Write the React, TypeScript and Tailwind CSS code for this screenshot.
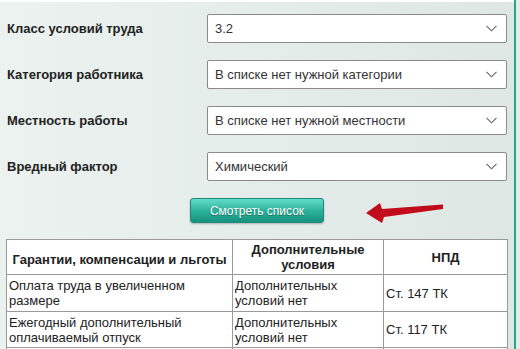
import React from "react";

const rows = [
  { label: "Класс условий труда", value: "3.2" },
  { label: "Категория работника", value: "В списке нет нужной категории" },
  { label: "Местность работы", value: "В списке нет нужной местности" },
  { label: "Вредный фактор", value: "Химический" },
];

function Chevron() {
  return (
    <svg width="11" height="7" viewBox="0 0 11 7" className="shrink-0">
      <path d="M0.5 0.8 L5.5 5.8 L10.5 0.8" fill="none" stroke="#666" strokeWidth="1.1" />
    </svg>
  );
}

export default function App() {
  return (
    <div
      className="w-[520px] h-[349px] overflow-hidden flex bg-[#e8eeeb]"
      style={{ fontFamily: '"Liberation Sans", Arial, sans-serif' }}
    >
      <div className="w-[514px] h-full flex flex-col bg-gradient-to-r from-[#ebf2ef] to-[#dfe7e4] border-t-2 border-white">
        <div className="shrink-0 flex flex-col gap-[17px] pt-[12px]">
          {rows.map((r) => (
            <div key={r.label} className="flex items-center h-[29px]">
              <div className="w-[207px] pl-[7px] text-[13px] font-bold text-[#222]">{r.label}</div>
              <div className="w-[300px] h-[29px] bg-white border border-[#8a8a8a] rounded-[2px] flex items-center justify-between pl-[7px] pr-[9px] text-[13px] text-[#333]">
                <span>{r.value}</span>
                <Chevron />
              </div>
            </div>
          ))}
        </div>
        <div className="shrink-0 relative h-[25px] mt-[17px]">
          <button className="absolute left-[190px] top-0 w-[134px] h-[25px] rounded-[3px] bg-gradient-to-b from-[#63dccb] via-[#2cb39c] to-[#17927f] border border-[#1b8d7a] text-white text-[12px] [text-shadow:0_1px_1px_rgba(0,0,0,0.35)] shadow-[0_1px_2px_rgba(0,0,0,0.25)]">
            Смотреть список
          </button>
          <svg className="absolute left-0 top-[-198px]" width="514" height="349" viewBox="0 0 514 349">
            <path d="M366,213 L380,203 L382,209 L443,204.5 L443,209 L384,217 L382,223 Z" fill="#c10c1c" />
          </svg>
        </div>
        <div className="shrink-0 mt-[16px] ml-[6px] w-[501px] bg-white">
          <table className="w-[501px] border-collapse text-[13px] text-[#222] leading-[15px] table-fixed">
            <colgroup>
              <col className="w-[226px]" />
              <col className="w-[151px]" />
              <col className="w-[124px]" />
            </colgroup>
            <thead>
              <tr className="h-[35px]">
                <th className="border border-[#9a9a9a] font-bold text-center px-[5px] pt-[4px]">Гарантии, компенсации и льготы</th>
                <th className="border border-[#9a9a9a] font-bold text-center px-[5px]">Дополнительные условия</th>
                <th className="border border-[#9a9a9a] font-bold text-center px-[5px]">НПД</th>
              </tr>
            </thead>
            <tbody>
              <tr className="h-[37px]">
                <td className="border border-[#9a9a9a] px-[2px] align-middle">Оплата труда в увеличенном размере</td>
                <td className="border border-[#9a9a9a] px-[2px] align-middle">Дополнительных условий нет</td>
                <td className="border border-[#9a9a9a] px-[2px] align-middle">Ст. 147 ТК</td>
              </tr>
              <tr className="h-[36px]">
                <td className="border border-[#9a9a9a] px-[2px] align-middle">Ежегодный дополнительный оплачиваемый отпуск</td>
                <td className="border border-[#9a9a9a] px-[2px] align-middle">Дополнительных условий нет</td>
                <td className="border border-[#9a9a9a] px-[2px] align-middle">Ст. 117 ТК</td>
              </tr>
              <tr className="h-[36px]">
                <td className="border border-[#9a9a9a] px-[2px]">&nbsp;</td>
                <td className="border border-[#9a9a9a] px-[2px]">&nbsp;</td>
                <td className="border border-[#9a9a9a] px-[2px]">&nbsp;</td>
              </tr>
            </tbody>
          </table>
        </div>
      </div>
      <div className="w-[2px] h-full bg-[#22a58c]" />
      <div className="w-[4px] h-full bg-[#e4ece9]" />
    </div>
  );
}
